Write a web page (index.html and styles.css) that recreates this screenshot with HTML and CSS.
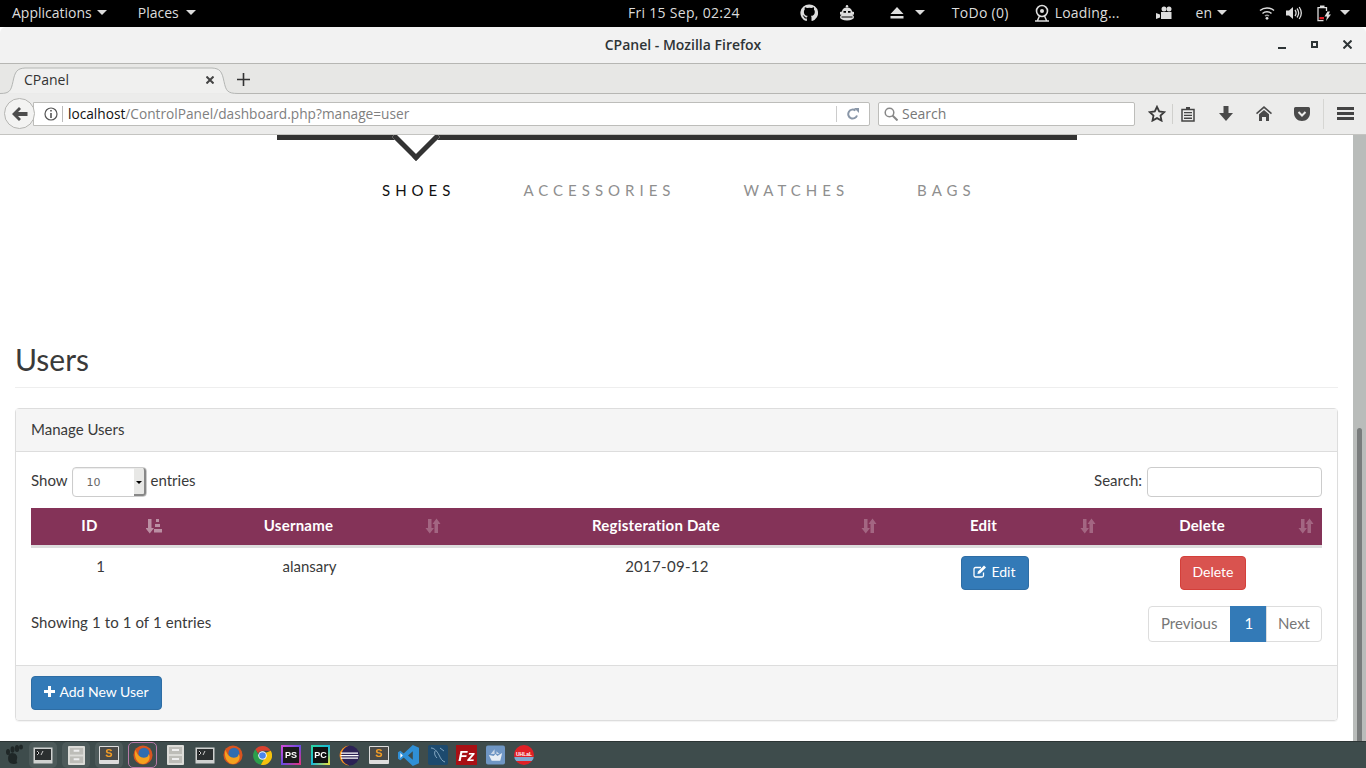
FILE: index.html
```html
<!DOCTYPE html>
<html lang="en">
<head>
    <meta charset="UTF-8">
    <meta name="viewport" content="width=device-width, initial-scale=1.0">
    <title>CPanel</title>
    <link rel="stylesheet" href="styles.css">
</head>
<body>
    <!-- shared sort icons -->
    <svg class="defs" width="0" height="0">
        <symbol id="sort" viewBox="0 0 16 16">
            <path d="M3 1h3.500v9H9l-4.250 5.500L.5 10H3z"/>
            <path d="M9.500 15V6H7.500L11.500.5 15.500 6H13v9z"/>
        </symbol>
        <symbol id="sort-asc" viewBox="0 0 16 16">
            <path d="M2 1h3.500v9H8l-4.250 5.500L-.5 10H2z"/>
            <path d="M10 1h3v3h-3zM9 6h5v3H9zM8 11h8v3.500H8z"/>
        </symbol>
    </svg>

    <div class="topbar">
        <div class="top-left">
            <span class="top-item">Applications <i class="caret"></i></span>
            <span class="top-item">Places <i class="caret"></i></span>
        </div>
        <div class="top-clock">Fri 15 Sep, 02:24</div>
        <div class="top-right">
            <svg class="tray-github" width="18" height="18" viewBox="0 0 18 18"><path fill="#ddd" d="M9 .5a8.500 8.500 0 0 0-2.700 16.600c.4 0 .6-.2.600-.5v-2.200c-1.900.3-2.500-.5-2.700-1-.1-.3-.6-1-1-1.200-.4-.2-.8-.6 0-.6.700 0 1.200.6 1.400.9.800 1.300 2.100 1 2.600.7.100-.6.300-1 .6-1.200-1.900-.2-3.900-1-3.900-4.200 0-.9.300-1.700.9-2.300-.1-.2-.4-1.100.1-2.300 0 0 .7-.2 2.400.9a8 8 0 0 1 4.200 0c1.600-1.100 2.300-.9 2.300-.9.500 1.200.2 2.100.1 2.300.6.600.9 1.400.9 2.300 0 3.200-2 4-3.900 4.200.3.300.6.800.6 1.600v3c0 .3.200.6.600.5A8.500 8.500 0 0 0 9 .5z"/><ellipse cx="9" cy="7.800" rx="4.300" ry="3.300" fill="#000"/><path fill="#000" d="M7.400 12.500h3.200V17.500H7.400z"/></svg>
            <svg class="tray-monkey" width="18" height="16" viewBox="0 0 18 16"><circle cx="9" cy="1.300" r="1.200" fill="#ddd"/><path fill="#ddd" d="M9 2.500c-3.200 0-5 1.800-5 4L2 7v2.500l2 .5h10l2-.5V7l-2-.5c0-2.200-1.800-4-5-4z"/><path fill="#000" d="M5.500 6h2.500v1.800H5.500zM10 6h2.500v1.800H10z"/><ellipse cx="9" cy="12" rx="7" ry="3.600" fill="#ddd"/><path stroke="#000" d="M3.500 12h11"/></svg>
            <svg class="tray-eject" width="14" height="12" viewBox="0 0 14 12"><path fill="#ddd" d="M7 0l6.500 7H.5zM.5 9h13v2.500H.5z"/></svg>
            <i class="caret tray-caret"></i>
            <span class="tray-todo">ToDo (0)</span>
            <svg class="tray-wheel" width="16" height="18" viewBox="0 0 16 18"><circle cx="8" cy="7" r="5.500" fill="none" stroke="#ddd" stroke-width="1.600"/><circle cx="8" cy="7" r="2" fill="#ddd"/><path stroke="#ddd" stroke-width="1.500" d="M5.500 12L3.500 16.500M10.500 12l2 4.500M1 17h14"/></svg>
            <span class="tray-loading">Loading...</span>
            <svg class="tray-camera" width="16" height="14" viewBox="0 0 16 14"><circle cx="8" cy="3" r="2.500" fill="#ddd"/><circle cx="13" cy="3" r="2.500" fill="#ddd"/><path fill="#ddd" d="M5 6h10.500v7H5zM0 7l4 1.500v3L0 13z"/></svg>
            <span class="tray-lang">en <i class="caret"></i></span>
            <svg class="tray-wifi" width="16" height="14" viewBox="0 0 16 14"><path fill="none" stroke="#ddd" stroke-width="1.500" d="M1 4.500c4-3.500 10-3.500 14 0M3.500 7.500c2.500-2.200 6.500-2.200 9 0"/><path fill="none" stroke="#999" stroke-width="1.500" d="M6 10c1.200-1 2.800-1 4 0"/><circle cx="8" cy="12.300" r="1.400" fill="#ddd"/></svg>
            <svg class="tray-volume" width="16" height="14" viewBox="0 0 16 14"><path fill="#ddd" d="M0 4.500h3L7 1v12L3 9.500H0z"/><path fill="none" stroke="#ddd" stroke-width="1.300" d="M9 4c1.300 1.800 1.300 4.200 0 6M11 2.500c2 2.700 2 6.300 0 9M13.200 1c2.600 3.700 2.600 8.300 0 12"/></svg>
            <svg class="tray-battery" width="15" height="18" viewBox="0 0 15 18"><path fill="none" stroke="#ddd" stroke-width="1.300" d="M9.500 7V3.700H1v13h5.500"/><path fill="#ddd" d="M3 1.500h4.500v2.200H3z"/><path fill="#e01b24" d="M2.500 13h4.500v2.300H2.500z"/><path fill="#ddd" d="M10.500 7.500l-3 5H10L9 17l5-6.500h-2.500L13 7.500z"/></svg>
            <i class="caret tray-caret-end"></i>
        </div>
    </div>

    <div class="titlebar">
        <span class="title-text">CPanel - Mozilla Firefox</span>
        <div class="window-buttons">
            <i class="btn-min"></i>
            <i class="btn-max"></i>
            <svg width="9" height="9" viewBox="0 0 9 9"><path stroke="#2e3436" stroke-width="2" d="M.5.500l8 8M8.500.500l-8 8"/></svg>
        </div>
    </div>

    <div class="tabbar">
        <div class="tab">
            <svg class="tab-shape" width="238" height="31" viewBox="0 0 238 31"><path fill="#f0f0ef" stroke="#b4b6b4" d="M0 29.500c10 0 11-3 13-12 2-10 4-13 12-13.500h187c8 .5 10 3.500 12 13.500 2 9 3 12 14 12"/></svg>
            <span class="tab-label">CPanel</span>
            <svg class="tab-close" width="8" height="8" viewBox="0 0 8 8"><path stroke="#444" stroke-width="2" d="M.5.500l7 7M7.500.500l-7 7"/></svg>
        </div>
        <svg class="tab-new" width="13" height="13" viewBox="0 0 13 13"><path stroke="#333" stroke-width="1.600" d="M6.500 0v13M0 6.500h13"/></svg>
    </div>

    <div class="navbar">
        <div class="back-btn">
            <svg width="16" height="14" viewBox="0 0 16 14"><path fill="#4d4d4d" d="M7 0l2 2-3 3h9.500v4H6l3 3-2 2-7-7z"/></svg>
        </div>
        <div class="urlbar">
            <svg class="info-icon" width="14" height="14" viewBox="0 0 14 14"><circle cx="7" cy="7" r="6" fill="none" stroke="#555" stroke-width="1.200"/><path fill="#555" d="M6.200 3h1.600v1.600H6.200zM6.200 6h1.600v5H6.200z"/></svg>
            <span class="url-sep"></span>
            <span class="url-text"><b>localhost</b>/ControlPanel/dashboard.php?manage=user</span>
            <span class="url-sep-end"></span>
            <svg class="reload-icon" width="12" height="12" viewBox="0 0 12 12"><path fill="none" stroke="#8a97a8" stroke-width="2" d="M10 7.500A4.500 4.500 0 1 1 8.500 2.500"/><path fill="#8a97a8" d="M7 0h5v5z"/></svg>
        </div>
        <div class="searchbar">
            <svg width="14" height="14" viewBox="0 0 14 14"><circle cx="5.500" cy="5.500" r="4.300" fill="none" stroke="#888" stroke-width="1.500"/><path stroke="#888" stroke-width="2" d="M8.500 8.500l5 5"/></svg>
            <span>Search</span>
        </div>
        <svg class="nav-star" width="18" height="17" viewBox="0 0 18 17"><path fill="none" stroke="#3a3a3a" stroke-width="1.800" d="M9 1.800l2.200 4.700 5 .6-3.700 3.500 1 5L9 13.100l-4.500 2.500 1-5L1.800 7.100l5-.6z"/></svg>
        <span class="nav-sep"></span>
        <svg class="nav-list" width="14" height="16" viewBox="0 0 14 16"><path fill="none" stroke="#444" stroke-width="1.500" d="M1 3.500h12V15H1z"/><path fill="#444" d="M5 1h4v3H5zM3 6h8v1.300H3zM3 8.800h8v1.300H3zM3 11.600h8v1.300H3z"/></svg>
        <svg class="nav-down" width="14" height="15" viewBox="0 0 14 15"><path fill="#4a4a4a" d="M4.500 0h5v7H14l-7 8-7-8h4.500z"/></svg>
        <svg class="nav-home" width="16" height="15" viewBox="0 0 16 15"><path fill="#4a4a4a" d="M8 0l8 7-1 1.200L8 2.300 1 8.200 0 7z"/><path fill="#4a4a4a" d="M8 4l5 4.300V15h-3v-4H6v4H3V8.300z"/></svg>
        <svg class="nav-pocket" width="16" height="14" viewBox="0 0 16 14"><path fill="#4a4a4a" d="M1.500 0h13A1.500 1.500 0 0 1 16 1.500V6c0 4.500-3.500 8-8 8S0 10.500 0 6V1.500A1.500 1.500 0 0 1 1.500 0z"/><path fill="none" stroke="#ececeb" stroke-width="2" d="M4.500 5L8 8.500 11.500 5"/></svg>
        <span class="nav-sep-end"></span>
        <div class="nav-menu"><i></i><i></i><i></i></div>
    </div>

    <div class="page">
        <div class="shop-header">
            <div class="shop-rule"></div>
            <div class="shop-chevron"></div>
            <ul class="shop-menu">
                <li class="active">SHOES</li>
                <li>ACCESSORIES</li>
                <li>WATCHES</li>
                <li>BAGS</li>
            </ul>
        </div>

        <div class="content">
            <h1 class="page-title">Users</h1>
            <div class="panel">
                <div class="panel-heading">Manage Users</div>
                <div class="panel-body">
                    <div class="table-tools">
                        <label class="length-label">Show
                            <span class="length-select"><span class="length-value">10</span><span class="length-arrow"></span></span>
                            entries</label>
                        <label class="search-label">Search: <span class="search-input"></span></label>
                    </div>
                    <table class="users-table">
                        <thead>
                            <tr>
                                <th class="col-id">ID<svg class="sort-icon sorted"><use href="#sort-asc"/></svg></th>
                                <th class="col-name">Username<svg class="sort-icon"><use href="#sort"/></svg></th>
                                <th class="col-date">Registeration Date<svg class="sort-icon"><use href="#sort"/></svg></th>
                                <th class="col-edit">Edit<svg class="sort-icon"><use href="#sort"/></svg></th>
                                <th class="col-delete">Delete<svg class="sort-icon"><use href="#sort"/></svg></th>
                            </tr>
                        </thead>
                        <tbody>
                            <tr>
                                <td>1</td>
                                <td>alansary</td>
                                <td class="cell-date">2017-09-12</td>
                                <td><button class="btn btn-primary btn-edit"><svg width="14" height="13" viewBox="0 0 14 13"><path fill="none" stroke="#fff" stroke-width="1.300" d="M10.500 7.500V10.500a1.500 1.500 0 0 1-1.500 1.500H2.500A1.500 1.500 0 0 1 1 10.500V4a1.500 1.500 0 0 1 1.500-1.500H8"/><path fill="#fff" d="M11 .5l2 2-6 6-2.600.6.600-2.600z"/></svg> Edit</button></td>
                                <td><button class="btn btn-danger btn-delete">Delete</button></td>
                            </tr>
                        </tbody>
                    </table>
                    <div class="table-footer">
                        <div class="table-info">Showing 1 to 1 of 1 entries</div>
                        <div class="pagination">
                            <a class="page-link">Previous</a>
                            <a class="page-link current">1</a>
                            <a class="page-link">Next</a>
                        </div>
                    </div>
                </div>
                <div class="panel-footer">
                    <button class="btn btn-primary btn-add"><svg width="11" height="11" viewBox="0 0 11 11"><path fill="#fff" d="M4 0h3v4h4v3H7v4H4V7H0V4h4z"/></svg> Add New User</button>
                </div>
            </div>
        </div>

        <div class="scrollbar"><div class="scroll-thumb"></div></div>
    </div>

    <div class="taskbar">
        <svg class="task-icon foot" width="20" height="22" viewBox="0 0 20 22"><g fill="#1f2727"><path d="M8 9c4 0 6 3 5 6-.5 2-.5 3 .5 4-3 2-8 1-9-2-1-4 0-8 3.500-8z"/><ellipse cx="4" cy="8" rx="2" ry="3"/><ellipse cx="8.500" cy="5.500" rx="2" ry="3.300"/><ellipse cx="13" cy="4.500" rx="2.200" ry="3.500"/><ellipse cx="17" cy="3" rx="2" ry="2.500"/></g></svg>
        <div class="task-slot"><svg width="20" height="17" viewBox="0 0 20 17"><rect x=".5" y=".5" width="19" height="16" fill="#cfd1d0"/><rect x="2" y="2" width="16" height="11" fill="#2b2f30"/><path stroke="#ccc" d="M4 4l2 2-2 2M8 8l2-4"/></svg></div>
        <div class="task-slot"><svg width="17" height="19" viewBox="0 0 18 20"><rect width="18" height="20" rx="1" fill="#dcdcd8"/><rect x="2" y="2" width="14" height="7" fill="#bdbdb8"/><rect x="2" y="11" width="14" height="7" fill="#bdbdb8"/><path fill="#eee" d="M6 4h6v2H6zM6 13h6v2H6z"/></svg></div>
        <div class="task-slot"><svg width="20" height="18" viewBox="0 0 20 18"><rect width="20" height="18" rx="1" fill="#ddd"/><rect x="1" y="1" width="18" height="13" fill="#4a4a48"/><text x="10" y="11" text-anchor="middle" class="task-s">S</text></svg></div>
        <div class="task-slot active"><svg width="20" height="20" viewBox="0 0 22 22"><circle cx="11" cy="11" r="10.500" fill="#d9541f"/><circle cx="12" cy="9" r="6" fill="#2f6db0"/><path fill="#f4a21f" d="M3 5c1 6 5 9 9 9s5-2 5-4c3 3 1 10-6 11C5 21 0 13 3 5z"/></svg></div>
        <svg class="task-icon cabinet" width="17" height="20" viewBox="0 0 17 20"><rect width="17" height="20" rx="1" fill="#dcdcd8"/><rect x="2" y="2" width="13" height="7" fill="#bdbdb8"/><rect x="2" y="11" width="13" height="7" fill="#bdbdb8"/><path fill="#eee" d="M5 4h7v2H5zM5 13h7v2H5z"/></svg>
        <svg class="task-icon term" width="20" height="17" viewBox="0 0 20 17"><rect x=".5" y=".5" width="19" height="16" fill="#cfd1d0"/><rect x="2" y="2" width="16" height="11" fill="#2b2f30"/><path stroke="#ccc" d="M4 4l2 2-2 2M8 8l2-4"/></svg>
        <svg class="task-icon fox" width="20" height="20" viewBox="0 0 22 22"><circle cx="11" cy="11" r="10.500" fill="#d9541f"/><circle cx="12" cy="9" r="6" fill="#2f6db0"/><path fill="#f4a21f" d="M3 5c1 6 5 9 9 9s5-2 5-4c3 3 1 10-6 11C5 21 0 13 3 5z"/></svg>
        <svg class="task-icon chrome" width="19" height="19" viewBox="0 0 20 20"><path fill="#d8412f" d="M10 0a10 10 0 0 1 8.700 5H10a5 5 0 0 0-4.700 3L2.500 3.500A10 10 0 0 1 10 0z"/><path fill="#2c9f4b" d="M2.500 3.500L6.800 11a5 5 0 0 0 4 3.900L8.200 19.800A10 10 0 0 1 2.500 3.500z"/><path fill="#f4c20d" d="M18.700 5A10 10 0 0 1 8.200 19.800l4.400-7.600A5 5 0 0 0 13.500 7z"/><circle cx="10" cy="10" r="4.500" fill="#fff"/><circle cx="10" cy="10" r="3.500" fill="#4a85ed"/></svg>
        <div class="task-box ps"><span>PS</span></div>
        <div class="task-box pc"><span>PC</span></div>
        <svg class="task-icon eclipse" width="21" height="21" viewBox="0 0 21 21"><circle cx="10.500" cy="10.500" r="10" fill="#2c2255"/><path fill="#f7941e" d="M10.500.5a10 10 0 0 0 0 20 10 10 0 0 1-8-10 10 10 0 0 1 8-10z"/><path fill="#fff" d="M2 7.500h17v1.300H2zM1.500 10h18v1.300h-18zM2 12.500h17v1.300H2z"/></svg>
        <svg class="task-icon sublime" width="20" height="18" viewBox="0 0 20 18"><rect width="20" height="18" rx="1" fill="#ddd"/><rect x="1" y="1" width="18" height="13" fill="#4a4a48"/><text x="10" y="11" text-anchor="middle" class="task-s">S</text></svg>
        <svg class="task-icon vscode" width="21" height="21" viewBox="0 0 22 22"><path fill="#2f8fd6" d="M15.500 0L22 3v16l-6.500 3L6 13l-3.500 3L0 14.500v-7L2.500 6 6 9zM15.500 6.500L10.500 11l5 4.500z"/><path fill="#fff" d="M2.500 8.500L5 11l-2.500 2.500z"/></svg>
        <svg class="task-icon mysql" width="20" height="20" viewBox="0 0 20 20"><rect width="20" height="20" rx="2" fill="#1d4a6e"/><path fill="none" stroke="#9fc0d8" stroke-width=".8" d="M3 3c3 0 6 3 8 7s3 6 6 7M12 3l4 3M7 6c-1 3 0 5 2 7"/></svg>
        <div class="task-box fz"><span>Fz</span></div>
        <svg class="task-icon ship" width="19" height="20" viewBox="0 0 20 20"><rect width="20" height="20" rx="2" fill="#6f96c4"/><path fill="#e8eef5" d="M3 10l5 1 2-2 2 2 5-3-2 8H6z"/><path fill="#cdd9e8" d="M9 4v5H5zM11 6v3h3z"/></svg>
        <div class="task-round"><span>UHLaL</span></div>
    </div>
</body>
</html>
```

FILE: styles.css
```css
* {
    box-sizing: border-box;
}

html, body {
    height: 100%;
}

body {
    margin: 0;
    height: 768px;
    display: flex;
    flex-direction: column;
    overflow: hidden;
    font-family: Lato, Arial, sans-serif;
    font-size: 15px;
    color: #3a3a3a;
    background: #fff;
}

.defs {
    position: absolute;
}

i {
    display: block;
}

/* desktop top bar */
.topbar {
    height: 27px;
    flex: none;
    position: relative;
    display: flex;
    align-items: center;
    justify-content: space-between;
    padding-bottom: 2px;
    background: #000;
    color: #dcdcdc;
    font-family: "Open Sans", sans-serif;
    font-size: 14px;
}

.top-left {
    display: flex;
    padding-left: 12px;
    gap: 31px;
}

.top-item, .tray-lang {
    display: flex;
    align-items: center;
    gap: 5px;
}

.top-item:last-child {
    gap: 7px;
}

.caret {
    width: 0;
    height: 0;
    border-left: 5px solid transparent;
    border-right: 5px solid transparent;
    border-top: 5px solid #dcdcdc;
}

.top-clock {
    position: absolute;
    left: 628px;
    letter-spacing: 0.3px;
}

.top-right {
    display: flex;
    align-items: center;
    padding-right: 16px;
}

.tray-monkey { margin-left: 20px; }
.tray-eject { margin-left: 34px; }
.tray-caret { margin-left: 11px; }
.tray-todo { margin-left: 27px; letter-spacing: 0.3px; }
.tray-wheel { margin-left: 25px; }
.tray-loading { margin-left: 5px; letter-spacing: 0.2px; }
.tray-camera { margin-left: 36px; }
.tray-lang { margin-left: 24px; }
.tray-wifi { margin-left: 32px; }
.tray-volume { margin-left: 11px; }
.tray-battery { margin-left: 15px; }
.tray-caret-end { margin-left: 8px; }

/* firefox window */
.titlebar {
    height: 37px;
    flex: none;
    position: relative;
    display: flex;
    align-items: center;
    justify-content: center;
    padding-bottom: 2px;
    background: #f2f2f2;
    border-radius: 6px 6px 0 0;
    border-bottom: 1px solid #b6b6b3;
    font-family: "Open Sans", sans-serif;
    font-size: 14px;
    font-weight: 600;
    color: #2e3436;
}

.window-buttons {
    position: absolute;
    right: 14px;
    top: 13px;
    display: flex;
    align-items: center;
    gap: 25px;
}

.btn-min {
    width: 8px;
    height: 2px;
    margin-top: 7px;
    background: #2e3436;
}

.btn-max {
    width: 7px;
    height: 7px;
    border: 2px solid #2e3436;
}

.tabbar {
    height: 30px;
    flex: none;
    position: relative;
    display: flex;
    align-items: center;
    background: #e7e7e5;
    font-family: "Open Sans", sans-serif;
    font-size: 14px;
    color: #333;
}

.tabbar::after {
    content: "";
    position: absolute;
    left: 238px;
    right: 0;
    bottom: 0;
    height: 1px;
    background: #b6b6b3;
}

.tab {
    width: 238px;
    height: 30px;
    position: relative;
    display: flex;
    align-items: center;
    padding-left: 24px;
}

.tab-shape {
    position: absolute;
    left: 0;
    top: 0;
}

.tab-label {
    position: relative;
}

.tab-close {
    position: absolute;
    left: 206px;
    top: 12px;
}

.tab-new {
    margin-left: -1px;
}

.navbar {
    height: 41px;
    flex: none;
    display: flex;
    align-items: center;
    padding: 0 0 1px 4px;
    background: #ececeb;
    border-bottom: 1px solid #c4c4c1;
    font-family: "Open Sans", sans-serif;
    font-size: 14px;
}

.back-btn {
    width: 31px;
    height: 31px;
    flex: none;
    z-index: 1;
    display: flex;
    align-items: center;
    justify-content: center;
    background: #f3f3f2;
    border: 1px solid #b5b5b2;
    border-radius: 50%;
}

.urlbar {
    width: 837px;
    height: 24px;
    margin-left: -2px;
    padding-left: 10px;
    display: flex;
    align-items: center;
    background: #fff;
    border: 1px solid #bdbdba;
    border-radius: 0 2px 2px 0;
    color: #808080;
    font-size: 13.700px;
}

.url-sep {
    width: 1px;
    height: 16px;
    margin: 0 5px 0 4px;
    background: #bbb;
}

.url-text b {
    font-weight: 400;
    color: #111;
}

.url-sep-end {
    width: 1px;
    height: 16px;
    margin-left: auto;
    margin-right: 10px;
    background: #ccc;
}

.reload-icon {
    margin-right: 10px;
}

.searchbar {
    width: 257px;
    height: 24px;
    margin-left: 8px;
    padding-left: 5px;
    display: flex;
    align-items: center;
    gap: 4px;
    background: #fff;
    border: 1px solid #bdbdba;
    border-radius: 2px;
    color: #777;
}

.nav-star { margin-left: 13px; }
.nav-sep { width: 1px; height: 20px; margin-left: 6px; background: #d0d0cd; }
.nav-list { margin-left: 8px; }
.nav-down { margin-left: 24px; }
.nav-home { margin-left: 23px; }
.nav-pocket { margin-left: 22px; }
.nav-sep-end { width: 1px; height: 30px; margin-left: 13px; background: #d6d6d3; }

.nav-menu {
    margin-left: 13px;
    width: 17px;
}

.nav-menu i {
    height: 3px;
    margin: 2px 0;
    background: #444;
}

/* page inside the browser */
.page {
    flex: 1;
    position: relative;
    overflow: hidden;
    background: #fff;
}

.shop-header {
    height: 190px;
    position: relative;
}

.shop-rule {
    width: 800px;
    height: 5px;
    margin-left: 277px;
    background: #333;
}

.shop-chevron {
    position: absolute;
    left: 399px;
    top: -15px;
    width: 34px;
    height: 34px;
    background: #fff;
    border-right: 5px solid #333;
    border-bottom: 5px solid #333;
    transform: rotate(45deg);
    transform-origin: center;
}

.shop-menu {
    list-style: none;
    margin: 0;
    padding: 41px 0 0 382px;
    display: flex;
    gap: 68px;
    font-size: 15px;
    letter-spacing: 5px;
    color: #8f8f8f;
}

.shop-menu .active {
    color: #111;
}

.content {
    padding: 0 28px 0 15px;
}

.page-title {
    margin: 17px 0 20px;
    padding-bottom: 11px;
    border-bottom: 1px solid #eee;
    font-size: 30px;
    font-weight: 400;
    line-height: 34px;
}

.panel {
    border: 1px solid #ddd;
    border-radius: 4px;
    box-shadow: 0 1px 1px rgba(0, 0, 0, 0.05);
}

.panel-heading {
    height: 43px;
    padding: 11px 15px;
    background: #f5f5f5;
    border-bottom: 1px solid #ddd;
}

.panel-body {
    padding: 15px;
}

.table-tools {
    display: flex;
    justify-content: space-between;
    height: 41px;
}

.length-label, .search-label {
    display: flex;
    align-items: flex-start;
    gap: 4px;
    line-height: 26px;
}

.search-label {
    gap: 5px;
}

.length-select {
    width: 75px;
    height: 30px;
    display: flex;
    justify-content: space-between;
    border: 1px solid #ccc;
    border-radius: 4px;
    box-shadow: inset 0 1px 1px rgba(0, 0, 0, 0.08);
}

.length-value {
    padding: 2px 0 0 14px;
    font-family: "DejaVu Sans", sans-serif;
    font-size: 11px;
    color: #666;
}

.length-arrow {
    width: 12px;
    position: relative;
    background: #e8e8e6;
    border-right: 2px solid #888;
    border-bottom: 2px solid #888;
    border-radius: 0 3px 3px 0;
}

.length-arrow::after {
    content: "";
    position: absolute;
    left: 2px;
    top: 13px;
    border-left: 3px solid transparent;
    border-right: 3px solid transparent;
    border-top: 3px solid #000;
}

.search-input {
    width: 175px;
    height: 30px;
    background: #fff;
    border: 1px solid #ccc;
    border-radius: 4px;
}

.users-table {
    width: 100%;
    table-layout: fixed;
    border-collapse: collapse;
}

.col-id { width: 139px; }
.col-name { width: 279px; }
.col-date { width: 436px; }
.col-edit { width: 219px; }

.users-table th {
    height: 38px;
    position: relative;
    padding: 0 30px 2px 8px;
    background: #843358;
    border-bottom: 3px solid #ddd;
    color: #fff;
    font-weight: 700;
    letter-spacing: 0.2px;
    text-align: center;
}

.users-table td {
    padding: 8px;
    height: 50px;
    text-align: center;
    vertical-align: top;
    line-height: 21px;
}

.users-table .cell-date {
    letter-spacing: 0.3px;
}

.sort-icon {
    position: absolute;
    right: 8px;
    top: 10px;
    width: 16px;
    height: 16px;
    fill: #fff;
    opacity: 0.25;
}

.sort-icon.sorted {
    opacity: 0.45;
}

.btn {
    display: inline-flex;
    align-items: center;
    justify-content: center;
    gap: 4px;
    padding: 0 0 2px;
    border: 1px solid transparent;
    border-radius: 4px;
    font-family: Lato, Arial, sans-serif;
    font-size: 14px;
    color: #fff;
}

.btn-primary {
    background: #337ab7;
    border-color: #2e6da4;
}

.btn-danger {
    background: #d9534f;
    border-color: #d43f3a;
}

.btn-edit {
    width: 68px;
    height: 34px;
}

.btn-delete {
    width: 66px;
    height: 34px;
}

.table-footer {
    display: flex;
    justify-content: space-between;
    height: 44px;
    margin-top: 8px;
}

.table-info {
    line-height: 33px;
    letter-spacing: 0.1px;
}

.pagination {
    display: flex;
    height: 36px;
}

.page-link {
    padding: 0 12px;
    line-height: 32px;
    background: #fff;
    border: 1px solid #ddd;
    margin-left: -1px;
    color: #777;
}

.page-link:first-child {
    padding-right: 13px;
    border-radius: 4px 0 0 4px;
}

.page-link:last-child {
    padding: 0 11px;
    border-radius: 0 4px 4px 0;
}

.page-link.current {
    padding: 0 13px;
    background: #337ab7;
    border-color: #337ab7;
    color: #fff;
}

.panel-footer {
    height: 55px;
    padding: 10px 15px;
    background: #f5f5f5;
    border-top: 1px solid #ddd;
    border-radius: 0 0 3px 3px;
}

.btn-add {
    width: 131px;
    height: 34px;
}

.scrollbar {
    position: absolute;
    right: 0;
    top: 0;
    bottom: 0;
    width: 13px;
    background: #b9bcba;
}

.scroll-thumb {
    position: absolute;
    left: 4px;
    width: 5px;
    top: 293px;
    bottom: 0;
    background: #797c7c;
    border-radius: 3px 3px 0 0;
}

/* bottom dock */
.taskbar {
    height: 27px;
    flex: none;
    display: flex;
    align-items: center;
    padding-left: 4px;
    background: #3e4c4c;
    border-top: 1px solid #2c3535;
}

.taskbar svg, .task-box span {
    filter: blur(0.3px);
}

.task-slot {
    width: 28px;
    height: 26px;
    flex: none;
    display: flex;
    align-items: center;
    justify-content: center;
    margin-left: 5px;
    background: rgba(255, 255, 255, 0.08);
    border-radius: 5px;
}

.task-slot.active {
    width: 29px;
    background: none;
    border: 1px solid #b87aa8;
}

.task-icon {
    flex: none;
}

.cabinet { margin-left: 10px; }
.term { margin-left: 11px; }
.fox { margin-left: 8px; }
.chrome { margin-left: 10px; }
.eclipse { margin-left: 9px; }
.sublime { margin-left: 9px; }
.vscode { margin-left: 9px; }
.mysql { margin-left: 9px; }
.ship { margin-left: 9px; }

.task-s {
    font-family: "Liberation Sans", sans-serif;
    font-size: 11px;
    font-weight: 700;
    fill: #f39c26;
}

.task-box {
    width: 20px;
    height: 20px;
    flex: none;
    margin-left: 9px;
    display: flex;
    align-items: center;
    justify-content: center;
    font-family: "Liberation Sans", sans-serif;
    font-weight: 700;
    font-size: 9px;
    color: #fff;
}

.task-box.ps {
    background: #1a1a1a;
    border: 2px solid;
    border-image: linear-gradient(135deg, #d04bd8, #6a4be0, #e0337f) 1;
}

.task-box.pc {
    margin-left: 10px;
    width: 19px;
    background: #111;
    border: 2px solid;
    border-image: linear-gradient(135deg, #2bd4a0, #18b8d8, #e8e03a) 1;
}

.task-box.fz {
    margin-left: 8px;
    width: 21px;
    background: #a80f14;
    font-size: 15px;
    font-style: italic;
}

.task-round {
    width: 20px;
    height: 20px;
    flex: none;
    margin-left: 9px;
    padding-bottom: 3px;
    display: flex;
    align-items: center;
    justify-content: center;
    background: linear-gradient(#e01f26 62%, #7fa8d0 62%, #7fa8d0 80%, #e01f26 80%);
    border-radius: 50%;
    font-family: "Liberation Sans", sans-serif;
    font-size: 5px;
    font-weight: 700;
    color: #fff;
}
```
